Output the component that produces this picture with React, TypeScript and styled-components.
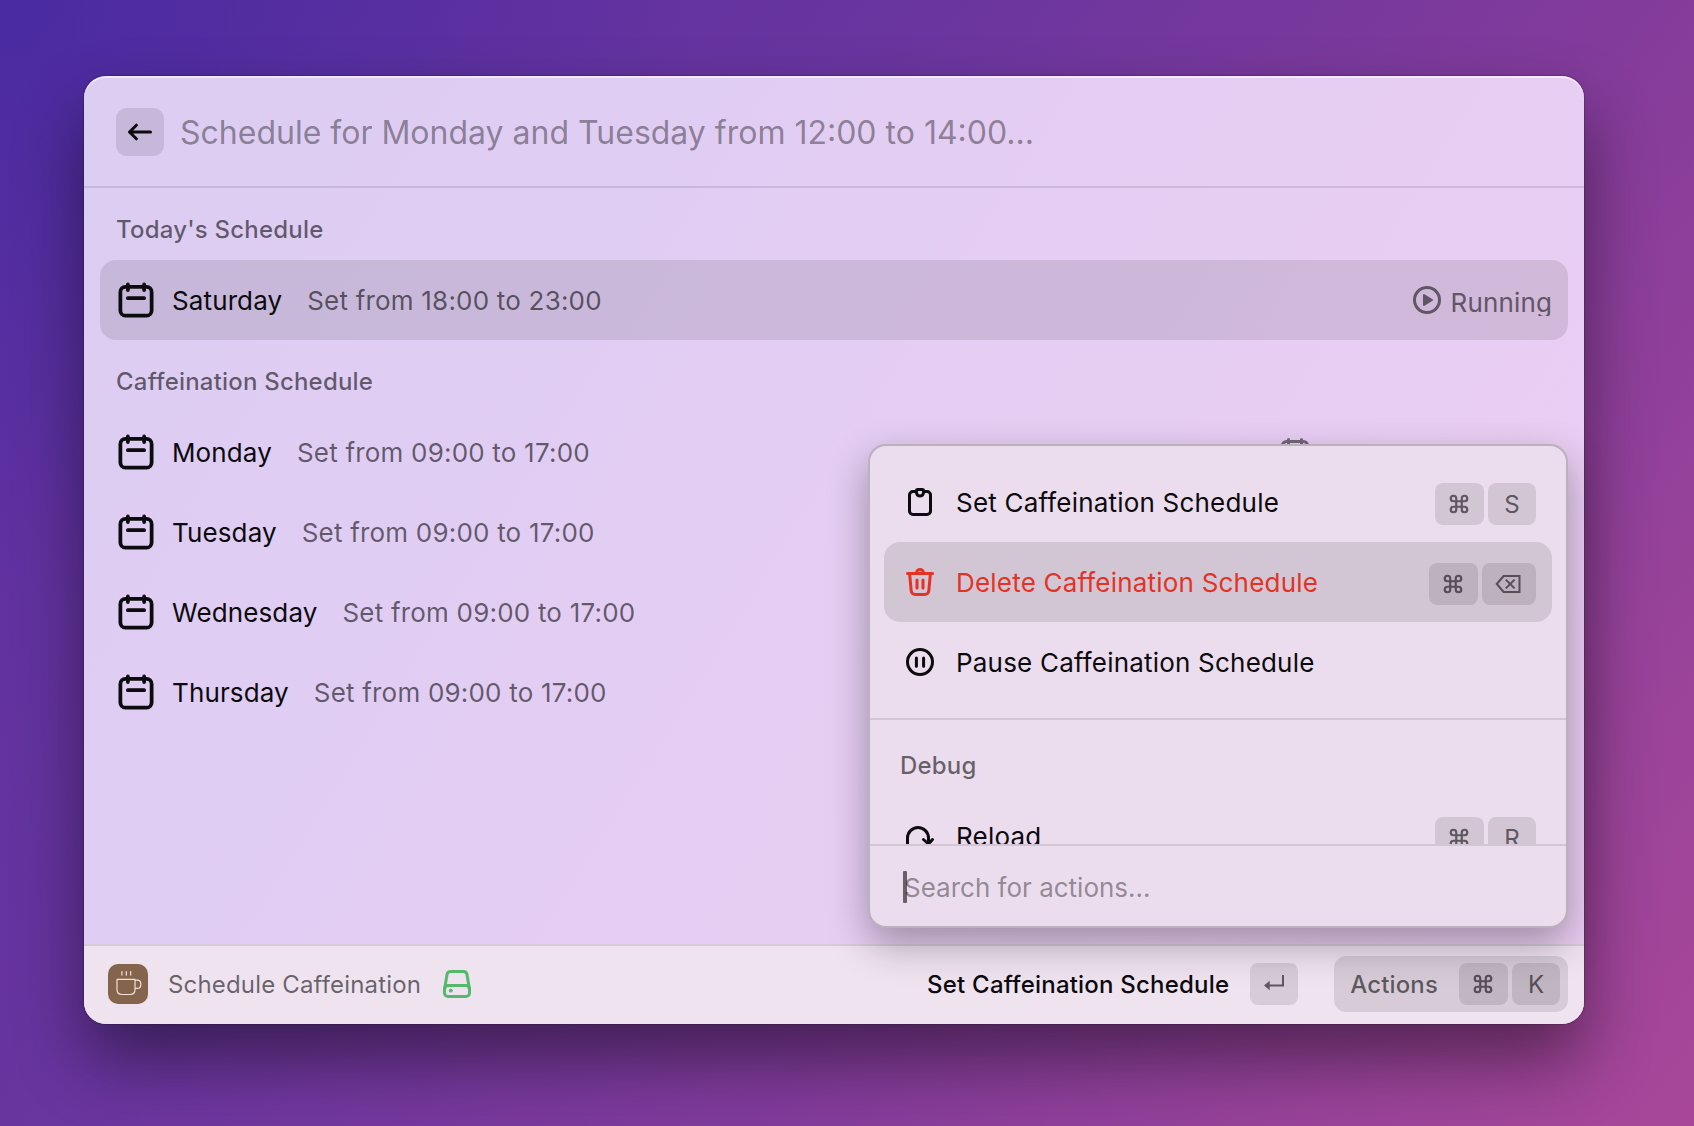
import React from "react";
import styled, { createGlobalStyle, css } from "styled-components";

const GlobalStyle = createGlobalStyle`
  * { box-sizing: border-box; }
  html, body { margin: 0; padding: 0; }
  body {
    font-family: Inter, "Liberation Sans", sans-serif;
    color: #0c0b0d;
    overflow: hidden;
  }
`;

const Desktop = styled.div`
  width: 1694px;
  height: 1126px;
  padding: 76px 110px 102px 84px;
  background:
    radial-gradient(ellipse 700px 600px at 0 0, rgba(68, 41, 162, 0.7), rgba(68, 41, 162, 0) 100%),
    linear-gradient(127deg, #5a2fa0 0%, #69359f 36%, #823b9b 64%, #96429a 82%, #a84799 100%);
`;

const Window = styled.main`
  position: relative;
  display: flex;
  flex-direction: column;
  width: 1500px;
  height: 948px;
  border-radius: 22px;
  background: linear-gradient(122deg, #dccdf3 0%, #e0cdf3 28%, #e5cdf3 50%, #e9cef3 75%, #ebcdf2 100%);
  box-shadow:
    inset 0 2px 0 rgba(255, 255, 255, 0.55),
    0 0 2px rgba(0, 0, 0, 0.6),
    0 36px 68px rgba(0, 0, 0, 0.45);
`;

const Header = styled.header`
  display: flex;
  align-items: center;
  gap: 16px;
  height: 112px;
  padding: 2px 32px 0;
  border-bottom: 2px solid rgba(0, 0, 0, 0.1);
`;

const BackButton = styled.button`
  display: grid;
  place-items: center;
  width: 48px;
  height: 48px;
  padding: 0;
  border: 0;
  border-radius: 11px;
  background: rgba(0, 0, 0, 0.1);
  color: #0c0b0d;
`;

const Query = styled.div`
  padding-top: 2px;
  font-size: 32px;
  line-height: 40px;
  color: rgba(0, 0, 0, 0.4);
`;

const Content = styled.div`
  flex: 1;
  padding: 0 16px;
`;

const SectionTitle = styled.h2<{ $menu?: boolean }>`
  margin: 0;
  height: ${(p) => (p.$menu ? 76 : 72)}px;
  padding: ${(p) => (p.$menu ? "31px 16px 0" : "27px 16px 0")};
  font-size: 24px;
  line-height: 30px;
  font-weight: 500;
  letter-spacing: 0.2px;
  color: rgba(0, 0, 0, 0.57);
`;

const ScheduleRow = styled.div<{ $selected?: boolean }>`
  display: flex;
  align-items: center;
  height: 80px;
  padding: 0 16px;
  border-radius: 16px;
  background: ${(p) => (p.$selected ? "rgba(0, 0, 0, 0.1)" : "transparent")};
`;

const Title = styled.span`
  margin-left: 16px;
  padding-top: 2px;
  font-size: 26px;
  line-height: 32px;
  letter-spacing: 0.12px;
`;

const Subtitle = styled.span`
  margin-left: 25px;
  padding-top: 2px;
  font-size: 26px;
  line-height: 32px;
  letter-spacing: 0.2px;
  color: rgba(0, 0, 0, 0.58);
`;

const Accessory = styled.span<{ $reserve?: number }>`
  display: flex;
  gap: 8px;
  margin-left: auto;
  padding-right: ${(p) => p.$reserve ?? 0}px;
  color: ${(p) => (p.$reserve ? "#74667b" : "#615665")};
`;

const AccessoryText = styled.span`
  height: 32px;
  overflow: hidden;
  font-size: 26px;
  line-height: 38px;
  letter-spacing: 0.15px;
`;

const Menu = styled.section`
  position: absolute;
  right: 16px;
  bottom: 96px;
  z-index: 2;
  display: flex;
  flex-direction: column;
  width: 700px;
  height: 484px;
  border: 2px solid rgba(0, 0, 0, 0.2);
  border-radius: 18px;
  background: #ebdded;
  box-shadow: 0 16px 40px rgba(0, 0, 0, 0.32);
`;

const MenuList = styled.div`
  height: 398px;
  overflow: hidden;
`;

const MenuGroup = styled.div<{ $divided?: boolean }>`
  padding: ${(p) => (p.$divided ? "16px 14px" : "0 14px")};
  ${(p) => p.$divided && css`border-bottom: 2px solid rgba(0, 0, 0, 0.1);`}
`;

const MenuItem = styled.div<{ $selected?: boolean; $danger?: boolean }>`
  display: flex;
  align-items: center;
  height: 80px;
  padding: 0 16px 0 20px;
  border-radius: 16px;
  background: ${(p) => (p.$selected ? "rgba(0, 0, 0, 0.1)" : "transparent")};
  color: ${(p) => (p.$danger ? "#e43324" : "#0c0b0d")};
`;

const MenuLabel = styled.span`
  margin-left: 20px;
  padding-top: 2px;
  font-size: 26px;
  line-height: 32px;
  letter-spacing: 0.2px;
`;

const Keys = styled.span<{ $drop?: boolean }>`
  display: flex;
  gap: 4px;
  margin-left: auto;
  margin-top: ${(p) => (p.$drop ? 4 : 0)}px;
`;

const Key = styled.kbd<{ $w?: number; $dark?: boolean }>`
  display: flex;
  align-items: center;
  justify-content: center;
  width: ${(p) => p.$w ?? 48}px;
  height: 42px;
  border-radius: 8px;
  background: rgba(0, 0, 0, 0.1);
  color: ${(p) => (p.$dark ? "#554e57" : "#5e5760")};
  font-family: inherit;
  font-size: 24px;
  line-height: 30px;
  font-weight: 400;
`;

const KeyLetter = styled.span`
  padding-top: 2px;
`;

const MenuSearch = styled.div`
  display: flex;
  align-items: center;
  height: 82px;
  padding: 2px 33px 0;
  border-top: 2px solid rgba(0, 0, 0, 0.1);
`;

const Caret = styled.span`
  width: 4px;
  height: 32px;
  margin-right: -3px;
  border-radius: 1px;
  background: #676069;
`;

const SearchHint = styled.span`
  padding-top: 2px;
  font-size: 26px;
  line-height: 32px;
  color: rgba(0, 0, 0, 0.4);
`;

const Footer = styled.footer`
  display: flex;
  align-items: center;
  height: 80px;
  padding: 0 16px 2px 24px;
  border-top: 2px solid #d5ccd6;
  border-radius: 0 0 22px 22px;
  background: #efe3f0;
`;

const ExtensionIcon = styled.span`
  width: 40px;
  height: 40px;
  border-radius: 10px;
  overflow: hidden;
  background: #85644d;
`;

const CommandName = styled.span`
  margin: 0 20px;
  padding-top: 2px;
  font-size: 24px;
  line-height: 30px;
  letter-spacing: 0.17px;
  color: rgba(0, 0, 0, 0.58);
`;

const DriveStatus = styled.span`
  color: #55b96b;
`;

const PrimaryAction = styled.span`
  margin: 0 21px 0 auto;
  padding-top: 2px;
  font-size: 24px;
  line-height: 30px;
  font-weight: 500;
  letter-spacing: 0.2px;
`;

const ActionsButton = styled.div`
  display: flex;
  align-items: center;
  height: 56px;
  margin-left: 36px;
  padding: 0 8px 0 16px;
  border-radius: 12px;
  background: rgba(0, 0, 0, 0.1);
`;

const ActionsLabel = styled.span`
  margin-right: 21px;
  padding-top: 2px;
  font-size: 24px;
  line-height: 30px;
  font-weight: 500;
  letter-spacing: 0.15px;
  color: rgba(0, 0, 0, 0.58);
`;

const Glyph = styled.svg`
  display: block;
  flex: none;
  fill: none;
  stroke: currentColor;
  stroke-width: 1.5;
  stroke-linecap: round;
  stroke-linejoin: round;
`;

const CommandGlyph = styled(Glyph)`
  margin-right: 2px;
`;

const ReturnGlyph = styled(Glyph)`
  margin-bottom: 2px;
`;

type IconProps = { size?: number };

const Icon = ({ size = 32, children }: React.PropsWithChildren<IconProps>) => (
  <Glyph width={size} height={size} viewBox="0 0 16 16">{children}</Glyph>
);

const CalendarIcon = ({ size = 40 }: IconProps) => (
  <Icon size={size}>
    <rect x="1.75" y="2.75" width="12.5" height="11.5" rx="2" />
    <path d="M4.75 1.75v2.25M11.25 1.75v2.25M4.75 7.25h6.5" />
  </Icon>
);

const ArrowLeftIcon = () => (
  <Icon><path d="M13.25 8H2.75M6.2 4.6 2.75 8l3.45 3.4" /></Icon>
);

const PlayIcon = () => (
  <Icon>
    <circle cx="8" cy="8" r="6.25" />
    <path d="M6.5 5.500v5l4-2.500z" fill="currentColor" strokeWidth="1" />
  </Icon>
);

const ClipboardIcon = () => (
  <Icon>
    <path d="M6 2.75H4.5c-1 0-1.75.75-1.75 1.75v8c0 1 .75 1.75 1.75 1.75h7c1 0 1.75-.75 1.75-1.75v-8c0-1-.75-1.75-1.75-1.75H10" />
    <path d="M6.25 2.35c0-.35.25-.6.6-.6h2.3c.35 0 .6.25.6.6v.95a1.75 1.75 0 0 1-3.5 0z" />
  </Icon>
);

const TrashIcon = () => (
  <Icon>
    <path d="M1.75 3.75h12.5M6.25 3.5a1.75 1.75 0 0 1 3.5 0M2.8 3.75l.8 8.7a2 2 0 0 0 2 1.8h4.8a2 2 0 0 0 2-1.8l.8-8.7" />
    <path d="M6.5 7v4M9.5 7v4" />
  </Icon>
);

const PauseIcon = () => (
  <Icon>
    <circle cx="8" cy="8" r="6.25" />
    <path d="M6.2 6v4.1M9.8 6v4.1" />
  </Icon>
);

const ReloadIcon = () => (
  <Icon><path d="M1.75 13V9a5.25 5.25 0 0 1 10.5 0v2.750M9.750 9.750l2.500 2.250 2-2.250" /></Icon>
);

const DriveIcon = () => (
  <Icon>
    <path d="M1.75 10.75 3 3.3c.15-.9.85-1.55 1.75-1.55h6.5c.9 0 1.6.65 1.75 1.55l1.25 7.45" />
    <rect x="1.75" y="8.75" width="12.5" height="5.5" rx="1.75" />
    <circle cx="4.9" cy="11.3" r="0.75" fill="currentColor" strokeWidth="0.5" />
  </Icon>
);

const CupGlyph = styled(Glyph)`
  color: #f0e2d6;
  stroke-width: 1.2;
`;

const CupIcon = () => (
  <CupGlyph width="40" height="40" viewBox="0 0 40 40">
    <path d="M9 15.400h18v10.100c0 3-1.900 5-4.900 5h-8.200c-3 0-4.900-2-4.900-5zM27 16.200h2.200c2.200 0 3.600 1.500 3.600 3.700v.5c0 2.200-1.500 4-3.700 4H27" />
    <path d="M13.900 7.500v3.600M18.300 7.500v3.600M22.700 7.500v3.600" />
  </CupGlyph>
);

const CommandKeyIcon = () => (
  <CommandGlyph width="22" height="22" viewBox="0 0 24 24">
    <path
      strokeWidth="2.4"
      d="M15 6v12a3 3 0 1 0 3-3H6a3 3 0 1 0 3 3V6a3 3 0 1 0-3 3h12a3 3 0 1 0-3-3"
    />
  </CommandGlyph>
);

const BackspaceKeyIcon = () => (
  <CommandGlyph width="26" height="18" viewBox="0 0 26 18">
    <path strokeWidth="2" strokeLinejoin="miter" d="M1.800 9 8.600 1h15.900v16H8.600z" />
    <path strokeWidth="2" strokeLinecap="butt" d="m10.800 4.600 8.800 8.800M19.600 4.600l-8.800 8.800" />
  </CommandGlyph>
);

const ReturnKeyIcon = () => (
  <ReturnGlyph width="20" height="16" viewBox="0 0 20 16">
    <path strokeWidth="2" strokeLinecap="butt" strokeLinejoin="miter" d="M19 0v10.500H4" />
    <path d="M0 10.500 5.700 5.700v9.600z" fill="currentColor" stroke="none" />
  </ReturnGlyph>
);

const days = [
  { day: "Monday", detail: "Set from 09:00 to 17:00", flagged: true },
  { day: "Tuesday", detail: "Set from 09:00 to 17:00" },
  { day: "Wednesday", detail: "Set from 09:00 to 17:00" },
  { day: "Thursday", detail: "Set from 09:00 to 17:00" },
];

const Shortcut = ({ letter }: { letter: string }) => (
  <Keys $drop>
    <Key $w={49}><CommandKeyIcon /></Key>
    <Key><KeyLetter>{letter}</KeyLetter></Key>
  </Keys>
);

export default function App() {
  return (
    <>
      <GlobalStyle />
      <Desktop>
        <Window>
          <Header>
            <BackButton aria-label="Back"><ArrowLeftIcon /></BackButton>
            <Query>Schedule for Monday and Tuesday from 12:00 to 14:00...</Query>
          </Header>

          <Content>
            <SectionTitle>Today's Schedule</SectionTitle>
            <ScheduleRow $selected>
              <CalendarIcon />
              <Title>Saturday</Title>
              <Subtitle>Set from 18:00 to 23:00</Subtitle>
              <Accessory>
                <PlayIcon />
                <AccessoryText>Running</AccessoryText>
              </Accessory>
            </ScheduleRow>

            <SectionTitle>Caffeination Schedule</SectionTitle>
            {days.map(({ day, detail, flagged }) => (
              <ScheduleRow key={day}>
                <CalendarIcon />
                <Title>{day}</Title>
                <Subtitle>{detail}</Subtitle>
                {flagged && (
                  <Accessory $reserve={241}><CalendarIcon size={32} /></Accessory>
                )}
              </ScheduleRow>
            ))}
          </Content>

          <Footer>
            <ExtensionIcon><CupIcon /></ExtensionIcon>
            <CommandName>Schedule Caffeination</CommandName>
            <DriveStatus><DriveIcon /></DriveStatus>
            <PrimaryAction>Set Caffeination Schedule</PrimaryAction>
            <Key><ReturnKeyIcon /></Key>
            <ActionsButton>
              <ActionsLabel>Actions</ActionsLabel>
              <Keys>
                <Key $w={49} $dark><CommandKeyIcon /></Key>
                <Key $dark><KeyLetter>K</KeyLetter></Key>
              </Keys>
            </ActionsButton>
          </Footer>

          <Menu>
            <MenuList>
              <MenuGroup $divided>
                <MenuItem>
                  <ClipboardIcon />
                  <MenuLabel>Set Caffeination Schedule</MenuLabel>
                  <Shortcut letter="S" />
                </MenuItem>
                <MenuItem $selected $danger>
                  <TrashIcon />
                  <MenuLabel>Delete Caffeination Schedule</MenuLabel>
                  <Keys $drop>
                    <Key $w={49} $dark><CommandKeyIcon /></Key>
                    <Key $w={54} $dark><BackspaceKeyIcon /></Key>
                  </Keys>
                </MenuItem>
                <MenuItem>
                  <PauseIcon />
                  <MenuLabel>Pause Caffeination Schedule</MenuLabel>
                </MenuItem>
              </MenuGroup>
              <MenuGroup>
                <SectionTitle $menu>Debug</SectionTitle>
                <MenuItem>
                  <ReloadIcon />
                  <MenuLabel>Reload</MenuLabel>
                  <Shortcut letter="R" />
                </MenuItem>
              </MenuGroup>
            </MenuList>
            <MenuSearch>
              <Caret />
              <SearchHint>Search for actions...</SearchHint>
            </MenuSearch>
          </Menu>
        </Window>
      </Desktop>
    </>
  );
}
